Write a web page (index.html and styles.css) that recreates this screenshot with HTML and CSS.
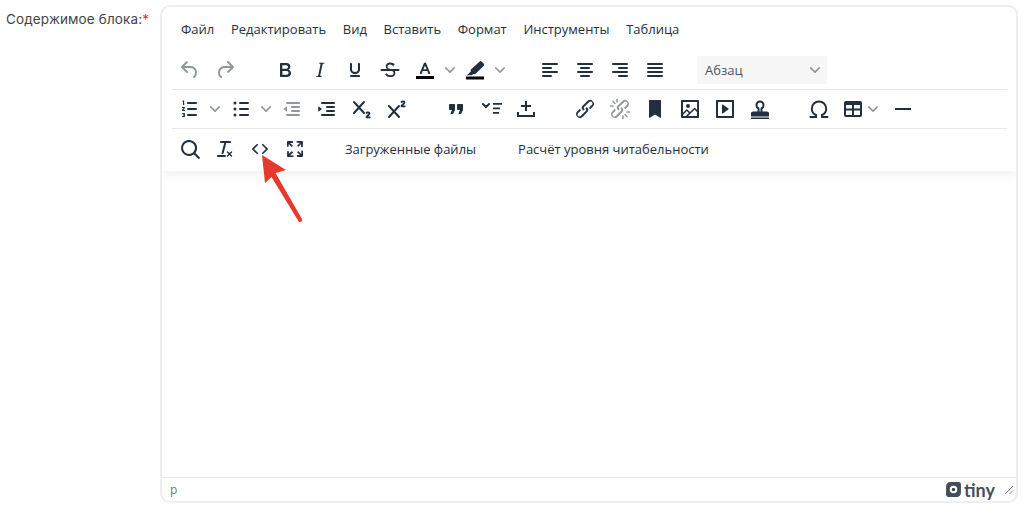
FILE: index.html
```html
<!DOCTYPE html>
<html lang="ru">
<head>
  <meta charset="UTF-8"/>
  <title>Содержимое блока</title>
  <link rel="stylesheet" href="styles.css">
</head>
<body>
  <!-- icon sprite -->
  <svg class="sprite" xmlns="http://www.w3.org/2000/svg">
    <symbol id="i-undo" viewBox="0 0 24 24"><path d="M6.4 8H12c3.7 0 6.2 2 6.8 5.1.6 2.7-.4 5.6-2.3 6.8a1 1 0 0 1-1-1.800c1.100-.6 1.800-2.700 1.400-4.600-.5-2.100-2.100-3.500-4.900-3.500H6.400l3.300 3.300a1 1 0 1 1-1.400 1.400l-5-5a1 1 0 0 1 0-1.400l5-5a1 1 0 0 1 1.400 1.400L6.400 8Z"/></symbol>
    <symbol id="i-redo" viewBox="0 0 24 24"><path d="M17.6 10H12c-2.8 0-4.4 1.4-4.9 3.5-.4 2 .3 4 1.4 4.600a1 1 0 1 1-1 1.800c-2-1.200-2.900-4.100-2.300-6.800.6-3 3-5.100 6.800-5.100h5.600l-3.300-3.300a1 1 0 1 1 1.400-1.400l5 5a1 1 0 0 1 0 1.400l-5 5a1 1 0 0 1-1.400-1.400l3.300-3.300Z"/></symbol>
    <symbol id="i-bold" viewBox="0 0 24 24"><path d="M7.8 19c-.3 0-.5 0-.6-.2l-.2-.5V5.7c0-.2 0-.4.2-.5l.6-.2h5c1.5 0 2.7.3 3.5 1 .7.6 1.1 1.4 1.1 2.5a3 3 0 0 1-.6 1.9c-.4.6-1 1-1.6 1.2.4.1.9.3 1.3.6s.8.7 1 1.2c.4.4.5 1 .5 1.6 0 1.3-.4 2.3-1.3 3-.8.7-2.1 1-3.8 1H7.8Zm5-8.3c.6 0 1.2-.1 1.6-.5.4-.3.6-.7.6-1.3 0-1.1-.8-1.7-2.3-1.7H9.3v3.5h3.4Zm.5 6c.7 0 1.3-.1 1.7-.4.4-.4.6-.9.6-1.5s-.2-1-.7-1.4c-.4-.3-1-.4-2-.4H9.4v3.8h4Z"/></symbol>
    <symbol id="i-italic" viewBox="0 0 24 24"><path d="m16.7 4.7-.1.9h-.3c-.6 0-1 0-1.4.3-.3.3-.4.6-.5 1.1l-2.1 9.8v.6c0 .5.4.8 1.4.8h.2l-.2.8H8l.2-.8h.2c1.1 0 1.8-.5 2-1.5l2-9.8.1-.5c0-.6-.4-.8-1.4-.8h-.3l.2-.9h5.8Z"/></symbol>
    <symbol id="i-underline" viewBox="0 0 24 24"><path d="M16 5c.6 0 1 .4 1 1v5.5a4 4 0 0 1-.4 1.8l-1 1.4a5.3 5.3 0 0 1-5.5 1 5 5 0 0 1-1.6-1c-.5-.4-.8-.9-1.1-1.4a4 4 0 0 1-.4-1.8V6c0-.6.4-1 1-1s1 .4 1 1v5.5c0 .3 0 .6.2 1l.6.7a3.3 3.3 0 0 0 2.2.8 3.4 3.4 0 0 0 2.2-.8c.3-.2.4-.5.6-.8l.2-.9V6c0-.6.4-1 1-1ZM8 17h8c.6 0 1 .4 1 1s-.4 1-1 1H8a1 1 0 0 1 0-2Z"/></symbol>
    <symbol id="i-strike" viewBox="0 0 24 24"><path d="M15.6 8.5c-.5-.7-1-1.1-1.3-1.3-.6-.4-1.3-.6-2-.6-2.7 0-2.8 1.7-2.8 2.1 0 1.6 1.8 2 3.2 2.3 4.4.9 4.6 2.8 4.6 3.9 0 1.4-.7 4.1-5 4.1A6.2 6.2 0 0 1 7 16.4l1.5-1.1c.4.6 1.6 2 3.7 2 1.6 0 2.5-.4 3-1 .3-.4.4-.9.4-1.3 0-.8-.4-2-3-2.6-3.5-.8-4.8-2.2-4.8-4 0-1.6.7-4 4.6-4 .9 0 1.7.2 2.4.5.9.3 1.5.8 2 1.4l-1.2 1.2Z"/><path d="M3.5 11h17a1 1 0 0 1 0 2h-17a1 1 0 0 1 0-2Z"/></symbol>
    <symbol id="i-textcolor" viewBox="0 0 24 24"><path d="M12 4.500c.5 0 .9.3 1.100.7l4 9.600a1 1 0 0 1-1.900.7L14.300 13H9.700l-.9 2.500a1 1 0 0 1-1.900-.7l4-9.600c.2-.4.6-.7 1.100-.7Zm0 3.300L10.400 11.200h3.200L12 7.800Z"/><path class="swatch" d="M3 18h18v3H3z"/></symbol>
    <symbol id="i-highlight" viewBox="0 0 24 24"><path d="M16.500 3.700a1.600 1.600 0 0 1 2.300 0l1.900 1.900a1.600 1.600 0 0 1 0 2.300L12.300 16l-2-.1-1.600 1.300H4l3.800-3.700-.2-1.800Z"/><path class="swatch" d="M3 18.500h18v3H3z"/></symbol>
    <symbol id="i-alignleft" viewBox="0 0 24 24"><path d="M5 5h14a1 1 0 0 1 0 2H5a1 1 0 1 1 0-2Zm0 4h8a1 1 0 0 1 0 2H5a1 1 0 0 1 0-2Zm0 8h8a1 1 0 0 1 0 2H5a1 1 0 0 1 0-2Zm0-4h14a1 1 0 0 1 0 2H5a1 1 0 0 1 0-2Z"/></symbol>
    <symbol id="i-aligncenter" viewBox="0 0 24 24"><path d="M5 5h14a1 1 0 0 1 0 2H5a1 1 0 1 1 0-2Zm3 4h8a1 1 0 0 1 0 2H8a1 1 0 1 1 0-2Zm0 8h8a1 1 0 0 1 0 2H8a1 1 0 0 1 0-2Zm-3-4h14a1 1 0 0 1 0 2H5a1 1 0 0 1 0-2Z"/></symbol>
    <symbol id="i-alignright" viewBox="0 0 24 24"><path d="M5 5h14a1 1 0 0 1 0 2H5a1 1 0 1 1 0-2Zm6 4h8a1 1 0 0 1 0 2h-8a1 1 0 0 1 0-2Zm0 8h8a1 1 0 0 1 0 2h-8a1 1 0 0 1 0-2Zm-6-4h14a1 1 0 0 1 0 2H5a1 1 0 0 1 0-2Z"/></symbol>
    <symbol id="i-justify" viewBox="0 0 24 24"><path d="M5 5h14a1 1 0 0 1 0 2H5a1 1 0 1 1 0-2Zm0 4h14a1 1 0 0 1 0 2H5a1 1 0 1 1 0-2Zm0 4h14a1 1 0 0 1 0 2H5a1 1 0 0 1 0-2Zm0 4h14a1 1 0 0 1 0 2H5a1 1 0 0 1 0-2Z"/></symbol>
    <symbol id="i-numlist" viewBox="0 0 24 24"><path d="M10 17h8a1 1 0 0 1 0 2h-8a1 1 0 0 1 0-2Zm0-6h8a1 1 0 0 1 0 2h-8a1 1 0 0 1 0-2Zm0-6h8a1 1 0 0 1 0 2h-8a1 1 0 1 1 0-2Z"/><path d="M5 3.500h1.200V8H5V4.600H4.200V4ZM4.200 10h2.600v1.200L5.400 12.800h1.500V14H4.100v-1.100l1.500-1.800H4.200Zm0 6h2.700v4H4.200v-1h1.500v-.5H4.800v-1h.9V17H4.200Z"/></symbol>
    <symbol id="i-bullist" viewBox="0 0 24 24"><path d="M11 5h8a1 1 0 0 1 0 2h-8a1 1 0 0 1 0-2Zm0 6h8a1 1 0 0 1 0 2h-8a1 1 0 0 1 0-2Zm0 6h8a1 1 0 0 1 0 2h-8a1 1 0 0 1 0-2Z"/><circle cx="6" cy="6" r="1.500"/><circle cx="6" cy="12" r="1.500"/><circle cx="6" cy="18" r="1.500"/></symbol>
    <symbol id="i-outdent" viewBox="0 0 24 24"><path d="M7 5h12a1 1 0 0 1 0 2H7a1 1 0 1 1 0-2Zm5 4h7a1 1 0 0 1 0 2h-7a1 1 0 0 1 0-2Zm0 4h7a1 1 0 0 1 0 2h-7a1 1 0 0 1 0-2Zm-5 4h12a1 1 0 0 1 0 2H7a1 1 0 0 1 0-2Zm-.900-2.700L3.500 12l2.600-2.300c.3-.3.900-.1.900.4v3.800c0 .5-.6.700-.9.400Z"/></symbol>
    <symbol id="i-indent" viewBox="0 0 24 24"><path d="M7 5h12a1 1 0 0 1 0 2H7a1 1 0 1 1 0-2Zm5 4h7a1 1 0 0 1 0 2h-7a1 1 0 0 1 0-2Zm0 4h7a1 1 0 0 1 0 2h-7a1 1 0 0 1 0-2Zm-5 4h12a1 1 0 0 1 0 2H7a1 1 0 0 1 0-2Zm-2.900-2.700L7 12 4.100 9.700c-.3-.3-.9-.1-.9.400v3.800c0 .5.600.7.900.4Z"/></symbol>
    <symbol id="i-sub" viewBox="0 0 24 24"><path class="line" d="M4 5l10 11M14 5 4 16"/><path class="digit" d="M16.500 16c.5-1 3-1 3 .5 0 1.500-3 2.500-3 3.800h3.300"/></symbol>
    <symbol id="i-sup" viewBox="0 0 24 24"><path class="line" d="M4 9l10 11M14 9 4 20"/><path class="digit" d="M16.500 5c.5-1 3-1 3 .5 0 1.500-3 2.500-3 3.800h3.300"/></symbol>
    <symbol id="i-quote" viewBox="0 0 24 24"><path d="M7.500 17h.9c.4 0 .7-.2.9-.6L11 13V8c0-.6-.4-1-1-1H6a1 1 0 0 0-1 1v4c0 .6.4 1 1 1h2l-1.300 2.700a1 1 0 0 0 .8 1.300Zm8 0h.9c.4 0 .7-.2.9-.6L19 13V8c0-.6-.4-1-1-1h-4a1 1 0 0 0-1 1v4c0 .6.4 1 1 1h2l-1.300 2.700a1 1 0 0 0 .8 1.300Z"/></symbol>
    <symbol id="i-accordion" viewBox="0 0 24 24"><path class="line" d="M4 7l3 3 3-3"/><path d="M14 6h9v1.800h-9Zm0 4.500h7v1.800h-7Zm0 4.500h6v1.800h-6Z"/></symbol>
    <symbol id="i-insert" viewBox="0 0 24 24"><path d="M11 4h2v4h4v2h-4v4h-2v-4H7V8h4Z"/><path d="M3 15h2v3h14v-3h2v5H3Z"/></symbol>
    <symbol id="i-link" viewBox="0 0 24 24"><path d="M6.200 12.300a1 1 0 0 1 1.400 1.400l-2 2a2 2 0 1 0 2.600 2.800l4.800-4.800a1 1 0 0 0 0-1.400 1 1 0 1 1 1.400-1.300 2.900 2.900 0 0 1 0 4L9.600 20a3.900 3.900 0 0 1-5.500-5.500l2-2Zm11.600-.6a1 1 0 0 1-1.400-1.400l2-2a2 2 0 1 0-2.600-2.800L11 10a1 1 0 0 0 0 1.400 1 1 0 1 1-1.400 1.300 2.900 2.900 0 0 1 0-4L14.400 4a3.900 3.900 0 0 1 5.500 5.500l-2 2Z"/></symbol>
    <symbol id="i-unlink" viewBox="0 0 24 24"><path d="M6.200 12.300a1 1 0 0 1 1.400 1.400l-2 2a2 2 0 1 0 2.600 2.800l4.800-4.800a1 1 0 0 0 0-1.400 1 1 0 1 1 1.400-1.300 2.900 2.900 0 0 1 0 4L9.600 20a3.900 3.900 0 0 1-5.500-5.500l2-2Zm11.600-.6a1 1 0 0 1-1.400-1.400l2-2a2 2 0 1 0-2.600-2.800L11 10a1 1 0 0 0 0 1.400 1 1 0 1 1-1.400 1.300 2.900 2.900 0 0 1 0-4L14.400 4a3.900 3.900 0 0 1 5.500 5.500l-2 2Z"/><path class="thin" d="M5 4.500l2 2M9 2.500v2.500M2.500 9H5M19 19.500l-2-2M15 21.500V19M21.500 15H19"/></symbol>
    <symbol id="i-bookmark" viewBox="0 0 24 24"><path d="M7 3h10c.6 0 1 .4 1 1v16.200c0 .5-.5.8-.9.500L12 17.500 6.900 20.700c-.4.300-.9 0-.9-.5V4c0-.6.400-1 1-1Z"/></symbol>
    <symbol id="i-image" viewBox="0 0 24 24"><path d="m5 15.700 3.300-3.200c.3-.3.7-.3 1 0L12 15l4.100-4c.3-.4.8-.4 1 0l2 1.900V5H5v10.700ZM5 18v1h3l2.800-2.900-2-2L5 17.900Zm14-3-2.500-2.400-6.400 6.500H19v-4ZM4 3h16c.6 0 1 .4 1 1v16c0 .6-.4 1-1 1H4a1 1 0 0 1-1-1V4c0-.6.4-1 1-1Zm6 8a2 2 0 1 0 0-4 2 2 0 0 0 0 4Z"/></symbol>
    <symbol id="i-media" viewBox="0 0 24 24"><path d="M4 3h16c.6 0 1 .4 1 1v16c0 .6-.4 1-1 1H4a1 1 0 0 1-1-1V4c0-.6.4-1 1-1Zm1 2v14h14V5H5Zm4.800 2.600 5.600 4a.5.5 0 0 1 0 .8l-5.600 4A.5.5 0 0 1 9 16V8a.5.5 0 0 1 .8-.4Z"/></symbol>
    <symbol id="i-stamp" viewBox="0 0 24 24"><path class="line" d="M10.500 15V11.500C9.300 11 8.500 9.800 8.500 8a3.500 3.500 0 0 1 7 0c0 1.800-.8 3-2 3.500V15M5 15.500h14"/><path d="M4 15h16a1 1 0 0 1 1 1v3.500H3V16a1 1 0 0 1 1-1ZM3 20.500h18V22H3Z"/></symbol>
    <symbol id="i-omega" viewBox="0 0 24 24"><path class="line" d="M3.500 20h5.500v-2C6.300 16.800 4.800 14.500 4.800 11.700 4.800 7.500 8 4.500 12 4.500s7.200 3 7.200 7.200c0 2.800-1.500 5.100-4.200 6.300v2h5.500"/></symbol>
    <symbol id="i-table" viewBox="0 0 24 24"><path d="M5 4h14a2 2 0 0 1 2 2v12a2 2 0 0 1-2 2H5a2 2 0 0 1-2-2V6c0-1.100.9-2 2-2Zm0 4v3.500h6V8H5Zm8 0v3.500h6V8h-6Zm-8 5.500V18h6v-4.500H5Zm8 0V18h6v-4.500h-6Z"/></symbol>
    <symbol id="i-hr" viewBox="0 0 24 24"><path d="M4 11h16v2H4z"/></symbol>
    <symbol id="i-search" viewBox="0 0 24 24"><path d="M16 17.300a8 8 0 1 1 1.400-1.400l4.300 4.400a1 1 0 0 1-1.400 1.400l-4.400-4.300Zm-5-.3a6 6 0 1 0 0-12 6 6 0 0 0 0 12Z"/></symbol>
    <symbol id="i-clear" viewBox="0 0 24 24"><path d="M13.200 6a1 1 0 0 1 0 .2l-2.600 10a1 1 0 0 1-1 .8h-.2a.8.8 0 0 1-.8-1l2.600-10H8a1 1 0 1 1 0-2h9a1 1 0 0 1 0 2h-3.800ZM5 18h7a1 1 0 0 1 0 2H5a1 1 0 0 1 0-2Zm13 1.500L16.500 18 15 19.500a.7.7 0 0 1-1-1l1.500-1.500-1.500-1.500a.7.7 0 0 1 1-1l1.500 1.500 1.500-1.500a.7.7 0 0 1 1 1L17.500 17l1.500 1.500a.7.7 0 0 1-1 1Z"/></symbol>
    <symbol id="i-code" viewBox="0 0 24 24"><path d="M9.800 15.700c.3.3.3.8 0 1-.3.4-.9.4-1.200 0l-4.400-4.100a.8.8 0 0 1 0-1.200l4.400-4.200c.3-.3.9-.3 1.200 0 .3.3.3.8 0 1.100L6 12l3.800 3.700ZM14.200 15.700c-.3.3-.3.8 0 1 .4.400.9.400 1.200 0l4.400-4.100c.3-.3.3-.9 0-1.200l-4.400-4.200a.8.8 0 0 0-1.200 0c-.3.3-.3.8 0 1.100L18 12l-3.800 3.700Z"/></symbol>
    <symbol id="i-fullscreen" viewBox="0 0 24 24"><path d="m15.300 10-1.200-1.300 2.900-3h-2.300a.9.9 0 1 1 0-1.700H19c.5 0 .9.4.9.9v4.400a.9.9 0 1 1-1.800 0V7l-2.900 3Zm0 4 3 3v-2.300a.9.9 0 1 1 1.700 0V19c0 .5-.4.900-.9.900h-4.400a.9.9 0 1 1 0-1.800H17l-3-2.900 1.300-1.200ZM10 15.400l-2.900 3h2.300a.9.9 0 1 1 0 1.700H5a.9.9 0 0 1-.9-.9v-4.400a.9.9 0 1 1 1.800 0V17l2.900-3 1.200 1.300ZM8.700 10 5.700 7v2.300a.9.9 0 0 1-1.700 0V5c0-.5.4-.9.900-.9h4.400a.9.9 0 0 1 0 1.800H7l3 2.900-1.300 1.200Z"/></symbol>
    <symbol id="i-chevron" viewBox="0 0 10 10"><path d="M8.700 2.200c.3-.3.8-.3 1 0 .4.400.4.900 0 1.200L5.700 7.800c-.3.300-.9.300-1.200 0L.2 3.400a.8.8 0 0 1 0-1.200c.3-.3.8-.3 1.100 0L5 6l3.700-3.800Z"/></symbol>
  </svg>

  <div class="page">
    <label class="field-label">Содержимое блока:<span class="req">*</span></label>

    <div class="editor">
      <div class="editor-header">
        <div class="menubar">
          <span class="menu-item">Файл</span>
          <span class="menu-item">Редактировать</span>
          <span class="menu-item">Вид</span>
          <span class="menu-item">Вставить</span>
          <span class="menu-item">Формат</span>
          <span class="menu-item">Инструменты</span>
          <span class="menu-item">Таблица</span>
        </div>

        <!-- row 1 -->
        <div class="tb-row tb-row-wide">
          <div class="tb-group">
            <span class="tb-btn off"><svg><use href="#i-undo"/></svg></span>
            <span class="tb-btn off"><svg><use href="#i-redo"/></svg></span>
          </div>
          <div class="tb-group">
            <span class="tb-btn"><svg><use href="#i-bold"/></svg></span>
            <span class="tb-btn"><svg><use href="#i-italic"/></svg></span>
            <span class="tb-btn"><svg><use href="#i-underline"/></svg></span>
            <span class="tb-btn"><svg><use href="#i-strike"/></svg></span>
            <span class="tb-btn"><svg><use href="#i-textcolor"/></svg></span>
            <span class="tb-chev"><svg><use href="#i-chevron"/></svg></span>
            <span class="tb-btn"><svg><use href="#i-highlight"/></svg></span>
            <span class="tb-chev"><svg><use href="#i-chevron"/></svg></span>
          </div>
          <div class="tb-group">
            <span class="tb-btn"><svg><use href="#i-alignleft"/></svg></span>
            <span class="tb-btn"><svg><use href="#i-aligncenter"/></svg></span>
            <span class="tb-btn"><svg><use href="#i-alignright"/></svg></span>
            <span class="tb-btn"><svg><use href="#i-justify"/></svg></span>
          </div>
          <div class="tb-select">
            <span>Абзац</span>
            <span class="tb-chev"><svg><use href="#i-chevron"/></svg></span>
          </div>
        </div>

        <!-- row 2 -->
        <div class="tb-row tb-row-short">
          <div class="tb-group">
            <span class="tb-btn"><svg><use href="#i-numlist"/></svg></span>
            <span class="tb-chev split-end"><svg><use href="#i-chevron"/></svg></span>
            <span class="tb-btn"><svg><use href="#i-bullist"/></svg></span>
            <span class="tb-chev split-end"><svg><use href="#i-chevron"/></svg></span>
            <span class="tb-btn off"><svg><use href="#i-outdent"/></svg></span>
            <span class="tb-btn"><svg><use href="#i-indent"/></svg></span>
            <span class="tb-btn"><svg><use href="#i-sub"/></svg></span>
            <span class="tb-btn"><svg><use href="#i-sup"/></svg></span>
          </div>
          <div class="tb-group">
            <span class="tb-btn"><svg><use href="#i-quote"/></svg></span>
            <span class="tb-btn"><svg><use href="#i-accordion"/></svg></span>
            <span class="tb-btn"><svg><use href="#i-insert"/></svg></span>
          </div>
          <div class="tb-group">
            <span class="tb-btn"><svg><use href="#i-link"/></svg></span>
            <span class="tb-btn off"><svg><use href="#i-unlink"/></svg></span>
            <span class="tb-btn"><svg><use href="#i-bookmark"/></svg></span>
            <span class="tb-btn"><svg><use href="#i-image"/></svg></span>
            <span class="tb-btn"><svg><use href="#i-media"/></svg></span>
            <span class="tb-btn"><svg><use href="#i-stamp"/></svg></span>
          </div>
          <div class="tb-group">
            <span class="tb-btn"><svg><use href="#i-omega"/></svg></span>
            <span class="tb-btn tb-btn-tight"><svg><use href="#i-table"/></svg></span>
            <span class="tb-chev"><svg><use href="#i-chevron"/></svg></span>
            <span class="tb-btn tb-btn-after"><svg><use href="#i-hr"/></svg></span>
          </div>
        </div>

        <!-- row 3 -->
        <div class="tb-row tb-row-last">
          <div class="tb-group">
            <span class="tb-btn"><svg><use href="#i-search"/></svg></span>
            <span class="tb-btn"><svg><use href="#i-clear"/></svg></span>
            <span class="tb-btn"><svg><use href="#i-code"/></svg></span>
            <span class="tb-btn"><svg><use href="#i-fullscreen"/></svg></span>
          </div>
          <div class="tb-group">
            <span class="tb-text">Загруженные файлы</span>
          </div>
          <div class="tb-group">
            <span class="tb-text">Расчёт уровня читабельности</span>
          </div>
        </div>
      </div>

      <div class="edit-area"></div>

      <div class="statusbar">
        <span class="path">p</span>
        <span class="brand">
          <svg class="brand-logo" viewBox="0 0 16 16"><path fill-rule="evenodd" d="M5 1h8a2 2 0 0 1 2 2v8a4 4 0 0 1-4 4H3a2 2 0 0 1-2-2V5a4 4 0 0 1 4-4Zm3 3.500a3.500 3.500 0 1 0 0 7 3.500 3.500 0 0 0 0-7Z"/><rect x="6.500" y="6.500" width="3" height="3" rx=".8"/></svg>
          <span class="brand-text">tiny</span>
        </span>
        <svg class="resize" viewBox="0 0 10 10"><path d="M1 9 9 1M5.500 9 9 5.500"/></svg>
      </div>
    </div>

    <!-- red arrow on top of the code button -->
    <svg class="arrow" viewBox="0 0 50 75"><path d="M6 3 30 18 19.500 21 46 67Q46.500 70.500 43 70L15.500 25 9 31Z"/></svg>
  </div>
</body>
</html>
```

FILE: styles.css
```css
/* --- page --- */
*{margin:0;padding:0;box-sizing:border-box}
body{font-family:'Open Sans',sans-serif;background:#fff;color:#222f3e;overflow:hidden}
.sprite{display:none}
.page{position:relative;display:flex;padding:5px 6px 0 6px}
.field-label{width:154px;flex:none;font:13.5px/18px 'Inter',sans-serif;color:#444;padding-top:5px;letter-spacing:.13px}
.req{color:#d9363e}

/* --- editor box --- */
.editor{width:858px;height:498px;border:2px solid #eee;border-radius:10px;display:flex;flex-direction:column;overflow:hidden}
.editor-header{box-shadow:0 2px 10px rgba(34,47,62,.09);padding:0 9px 3px 10px}
.menubar{height:43px;display:flex;align-items:center;padding-left:1px;gap:.67px}
.menu-item{font-size:13px;padding:0 8px;white-space:nowrap}

/* --- toolbars --- */
.tb-row{display:flex;align-items:center;gap:24px;height:39px;border-bottom:1px solid #e8e8e8}
.tb-row-wide{gap:25px;height:40px}
.tb-row-short{height:39px}
.tb-row-last{border-bottom:none}
.tb-group{display:flex;align-items:center}
.tb-btn{width:35px;height:28px;display:flex;align-items:center;justify-content:center;fill:#222f3e}
.tb-btn svg{width:24px;height:24px}
.tb-btn.off{fill:rgba(34,47,62,.5);color:rgba(34,47,62,.5)}
.tb-btn-tight{margin:0 -5px 0 -1px}
.tb-btn-after{margin-left:5px}
.tb-chev{width:15px;height:28px;display:flex;align-items:center;justify-content:center;fill:rgba(34,47,62,.5)}
.tb-chev svg{width:10px;height:10px}
.split-end{margin-right:1px}
.tb-select{width:130px;height:28px;background:#f7f7f7;display:flex;align-items:center;justify-content:space-between;padding:0 5px 0 8px;font-size:13px;color:#4a5562}
.tb-text{font-size:13px;padding:0 9px;white-space:nowrap}

/* sprite shapes that are strokes */
.line{fill:none;stroke:#222f3e;stroke-width:2;stroke-linecap:round}
.thin{fill:none;stroke:currentColor;stroke-width:1.5;stroke-linecap:round}
.digit{fill:none;stroke:#222f3e;stroke-width:1.8;stroke-linecap:round;stroke-linejoin:round}
.swatch{fill:#000}

/* --- content + status --- */
.edit-area{flex:1}
.statusbar{height:24px;border-top:1px solid #e8e8e8;display:flex;align-items:center;padding:0 2px 0 8px;font-size:12px;color:#7a7a7a}
.path{margin-right:auto}
.brand{display:flex;align-items:center;gap:2px;margin-right:9px}
.brand-logo{width:17px;height:17px;fill:#454f5a}
.brand-text{font:700 18px/20px 'Lato',sans-serif;color:#454f5a}
.resize{width:10px;height:10px;fill:none;stroke:#888;stroke-width:1}

/* --- annotation --- */
.arrow{position:absolute;left:256px;top:152px;width:50px;height:75px;fill:#e6392d}
```
